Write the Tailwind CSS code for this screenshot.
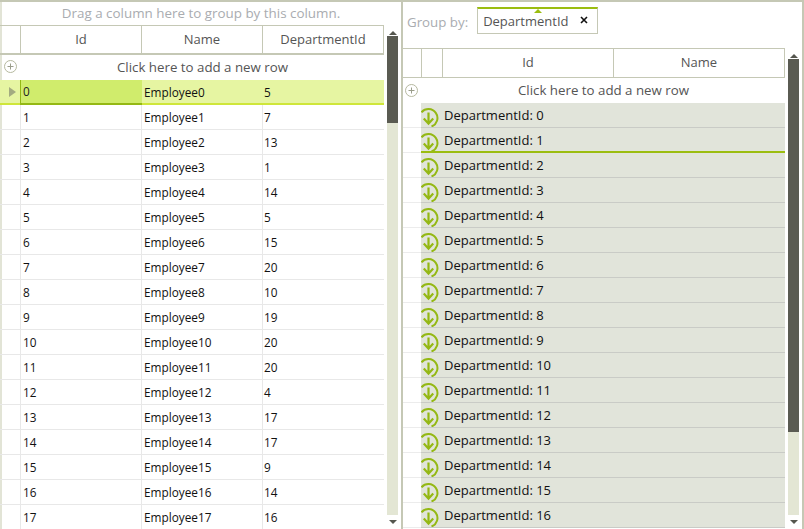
<!DOCTYPE html>
<html lang="en">
<head>
	<meta charset="UTF-8">
	<title>GridView grouping</title>
	<script src="https://cdn.jsdelivr.net/npm/@tailwindcss/browser@4"></script>
</head>
<body class="bg-white">
	<div class="w-[804px] h-[529px] overflow-hidden flex border-t-2 border-r-2 border-[#c5c8b5] font-['Open_Sans',sans-serif] text-[#222]">
		<!-- Left grid -->
		<div class="w-[401px] h-full shrink-0 flex flex-col shadow-[inset_2px_0_0_#e2e4d6]">
			<div class="h-[23px] shrink-0 flex items-center justify-center text-[13.4px] text-[#a9acb0] pl-px">Drag a column here to group by this column.</div>
			<div class="flex flex-1 min-h-0">
				<div class="w-[384px] shrink-0 flex flex-col overflow-hidden">
					<div class="h-[30px] shrink-0 flex border-t border-b-2 border-r border-[#c5c8b5] text-[13px] text-[#555]">
						<div class="w-[21px] border-r border-[#c5c8b5]"></div>
						<div class="w-[121px] border-r border-[#c5c8b5] flex items-center justify-center">Id</div>
						<div class="w-[121px] border-r border-[#c5c8b5] flex items-center justify-center">Name</div>
						<div class="flex-1 flex items-center justify-center">DepartmentId</div>
					</div>
					<div class="h-[25px] shrink-0 flex items-center relative text-[13.3px] text-[#555]">
						<svg class="absolute left-[4px] top-[5px]" width="13" height="13" viewBox="0 0 13 13" fill="none" stroke="#b5b89f"><circle cx="6.5" cy="6.5" r="6"/><path d="M3.5 6.5h6M6.5 3.5v6" stroke="#9a9d8a"/></svg>
						<div class="w-full text-center pl-[21px]">Click here to add a new row</div>
					</div>
					<div id="left-rows"></div>
				</div>
				<div class="w-[17px] shrink-0 flex flex-col pl-[3px] pr-[3px]">
					<div class="h-[11px] shrink-0 flex items-end justify-center pb-[1px]"><div class="w-0 h-0 border-x-[4px] border-x-transparent border-b-[4px] border-b-[#55564e]"></div></div>
					<div class="h-[87px] shrink-0 bg-[#5a5b52]"></div>
					<div class="h-[392px] shrink-0 bg-[#e3e6d4]"></div>
					<div class="flex-1 flex justify-center pt-[5px]"><div class="w-0 h-0 border-x-[4px] border-x-transparent border-t-[4px] border-t-[#55564e]"></div></div>
				</div>
			</div>
		</div>
		<!-- Right grid -->
		<div class="flex-1 h-full min-w-0 flex flex-col border-l-2 border-[#c5c8b5]">
			<div class="h-[46px] shrink-0 flex items-start pl-[4px] pt-[5px] gap-[9px]">
				<div class="mt-[6px] text-[13.3px] text-[#a9acb0]">Group by:</div>
				<div class="relative w-[121px] h-[27px] border border-[#c5c8b5] border-t-2 border-t-[#9bbd0f] flex items-center pl-[5px] pt-[2px] text-[13px] text-[#555]">
					<div class="absolute left-[56px] top-0 w-0 h-0 border-x-[4px] border-x-transparent border-b-[4px] border-b-[#9bbd0f]"></div>
					DepartmentId
					<svg class="absolute left-[102px] top-[7px]" width="8" height="8" viewBox="0 0 8 8" stroke="#111" stroke-width="1.6"><path d="M1 1l6 6M7 1l-6 6"/></svg>
				</div>
			</div>
			<div class="flex flex-1 min-h-0">
				<div class="w-[382px] shrink-0 flex flex-col overflow-hidden">
					<div class="h-[30px] shrink-0 flex border border-l-0 border-[#c5c8b5] text-[13px] text-[#555]">
						<div class="w-[19px] border-r border-[#c5c8b5]"></div>
						<div class="w-[21px] border-r border-[#c5c8b5]"></div>
						<div class="w-[171px] border-r border-[#c5c8b5] flex items-center justify-center">Id</div>
						<div class="flex-1 flex items-center justify-center">Name</div>
					</div>
					<div class="h-[25px] shrink-0 flex items-center relative text-[13.3px] text-[#555]">
						<svg class="absolute left-[2px] top-[6px]" width="13" height="13" viewBox="0 0 13 13" fill="none" stroke="#b5b89f"><circle cx="6.5" cy="6.5" r="6"/><path d="M3.5 6.5h6M6.5 3.5v6" stroke="#9a9d8a"/></svg>
						<div class="w-full text-center pl-[19px]">Click here to add a new row</div>
					</div>
					<div id="right-rows"></div>
				</div>
				<div class="w-[17px] shrink-0 flex flex-col pl-[3px] pr-[3px]">
					<div class="h-[11px] shrink-0 flex items-end justify-center pb-[1px]"><div class="w-0 h-0 border-x-[4px] border-x-transparent border-b-[4px] border-b-[#55564e]"></div></div>
					<div class="h-[373px] shrink-0 bg-[#5a5b52]"></div>
					<div class="h-[83px] shrink-0 bg-[#e3e6d4]"></div>
					<div class="flex-1 flex justify-center pt-[5px]"><div class="w-0 h-0 border-x-[4px] border-x-transparent border-t-[4px] border-t-[#55564e]"></div></div>
				</div>
			</div>
		</div>
	</div>

	<script>
		const departments = [5, 7, 13, 1, 14, 5, 15, 20, 10, 19, 20, 20, 4, 17, 17, 9, 14, 16];

		// Left grid rows, first row is the selected one
		document.getElementById('left-rows').innerHTML = departments.map((dept, i) => {
			if (i === 0) {
				return `<div class="h-[25px] flex bg-[#e6f5a2] border-b-2 border-[#cfe63a] text-[11.8px] text-[#111]">
					<div class="w-[20px] flex items-center pl-[9px]"><div class="w-0 h-0 border-y-[5px] border-y-transparent border-l-[7px] border-l-[#a3ab80]"></div></div>
					<div class="w-[122px] -mb-[2px] bg-[#d0ec6c] border-l border-b-2 border-[#94b814] pl-[2px] pt-px flex items-center text-[#222]">${i}</div>
					<div class="w-[121px] pl-[2px] pt-[2px] flex items-center">Employee${i}</div>
					<div class="flex-1 pl-[1px] pt-[2px] flex items-center">${dept}</div>
				</div>`;
			}
			return `<div class="h-[25px] flex border-b border-[#e8e8e8] text-[11.8px] text-[#111]">
				<div class="w-[21px] border-r border-[#e8e8e8]"></div>
				<div class="w-[121px] border-r border-[#e8e8e8] pl-[2px] pt-px flex items-center">${i}</div>
				<div class="w-[121px] border-r border-[#e8e8e8] pl-[2px] pt-px flex items-center">Employee${i}</div>
				<div class="flex-1 pl-[1px] pt-px flex items-center">${dept}</div>
			</div>`;
		}).join('');

		// Right grid group rows, all collapsed
		const groupIds = Array.from({ length: 17 }, (_, i) => i);
		document.getElementById('right-rows').innerHTML = groupIds.map(id => {
			const border = id === 1 ? 'border-b-2 border-[#9bbd0f]' : 'border-b border-[#c9cbc6]';
			return `<div class="h-[25px] flex">
				<div class="w-[18px] shrink-0 border-b border-[#ececec]"></div>
				<div class="flex-1 bg-[#e1e4da] ${border} relative overflow-hidden flex items-start pl-[23px] pt-[3px] text-[13px] text-[#111]">
					<svg class="absolute left-0 top-[4px]" width="19" height="21" viewBox="0 0 19 21" fill="none" stroke="#94b814" stroke-width="2"><path d="M0.5 5.3A9 9 0 1 1 10.5 19.5"/><path d="M7.5 5.5v11M2.8 11.5l4.7 5.2 4.7-5.2" stroke-width="2.2"/></svg>
					DepartmentId: ${id}
				</div>
			</div>`;
		}).join('');
	</script>
</body>
</html>
